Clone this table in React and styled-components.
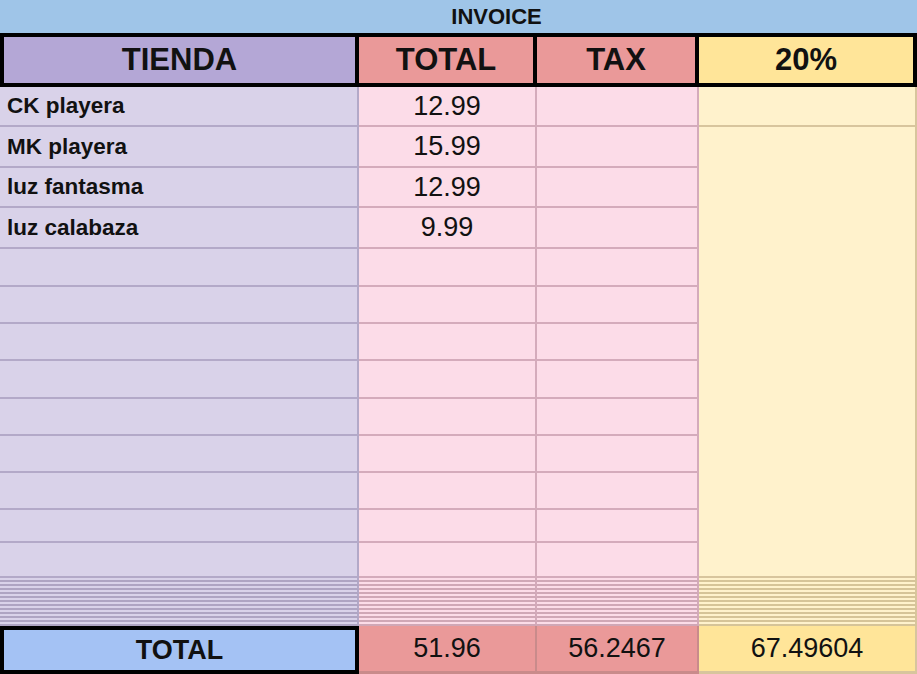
import React from 'react';
import styled, { createGlobalStyle, css } from 'styled-components';

const GlobalStyle = createGlobalStyle`
    body {
        margin: 0;
        background: #ffffff;
        font-family: "Liberation Sans", Arial, sans-serif;
    }
`;

const TONES = {
    purple: { head: '#b4a7d6', fill: '#d9d2e9', line: '#b3a9c8', stripe: '#aea4c2' },
    pink: { head: '#ea9999', fill: '#fcdce8', line: '#d4abbb', stripe: '#d0a7b6' },
    yellow: { head: '#ffe599', fill: '#fff2cc', line: '#d8c59d', stripe: '#d6c498' },
    blue: { head: '#a4c2f4', fill: '#a4c2f4', line: '#000000', stripe: '#000000' },
};

// hand-tuned row heights so the grid lines land where the sheet draws them
const ROWS = [
    '33px',
    '54px',
    '40px 41px 40px 41px',
    '38px 37px 37px 38px 37px 37px 37px 33px 35px',
    'repeat(12, 4px)',
    '48px',
].join(' ');

const Sheet = styled.div`
    display: grid;
    grid-template-columns: 359px 178px 162px 218px;
    grid-template-rows: ${ROWS};
    width: 917px;
    height: 674px;
    overflow: hidden;
    color: #111111;
`;

const Title = styled.div`
    grid-column: 1 / -1;
    background: #9fc5e8;
    display: flex;
    align-items: center;
    justify-content: center;
    padding-left: 76px;
    font-weight: 700;
    font-size: 22px;
`;

const HeadCell = styled.div`
    box-sizing: border-box;
    background: ${(p) => TONES[p.$tone].head};
    border-top: 4px solid #000;
    border-bottom: 4px solid #000;
    border-right: 4px solid #000;
    border-left: ${(p) => (p.$first ? '4px solid #000' : 'none')};
    display: flex;
    align-items: center;
    justify-content: center;
    font-weight: 700;
    font-size: 31px;
`;

const Cell = styled.div`
    box-sizing: border-box;
    background: ${(p) => TONES[p.$tone].fill};
    border-bottom: 2px solid ${(p) => TONES[p.$tone].line};
    border-right: 2px solid ${(p) => TONES[p.$tone].line};
    display: flex;
    align-items: center;
    min-height: 0;
    ${(p) => p.$span && css`grid-row: span ${p.$span};`}
`;

const NameCell = styled(Cell)`
    padding: 0 0 0 7px;
    font-weight: 700;
    font-size: 22.5px;
`;

const NumberCell = styled(Cell)`
    justify-content: center;
    font-size: 27px;
`;

const StripeCell = styled(Cell)`
    border-bottom: 2px solid ${(p) => TONES[p.$tone].stripe};
`;

const TotalLabel = styled.div`
    box-sizing: border-box;
    background: ${TONES.blue.head};
    border: 4px solid #000;
    display: flex;
    align-items: center;
    justify-content: center;
    font-weight: 700;
    font-size: 27px;
`;

const TotalValue = styled.div`
    box-sizing: border-box;
    background: ${(p) => TONES[p.$tone].head};
    border-right: 2px solid ${(p) => (p.$tone === 'yellow' ? '#d8c59d' : '#c98b8b')};
    border-bottom: 3px solid ${(p) => (p.$tone === 'yellow' ? '#d8c59d' : '#c98b8b')};
    display: flex;
    align-items: center;
    justify-content: center;
    font-size: 27px;
`;

const items = [
    { name: 'CK playera', total: '12.99' },
    { name: 'MK playera', total: '15.99' },
    { name: 'luz fantasma', total: '12.99' },
    { name: 'luz calabaza', total: '9.99' },
];

const EMPTY_ROWS = 9;
const STRIPE_ROWS = 12;

const App = () => {
    const emptyRows = Array.from({ length: EMPTY_ROWS });
    const stripes = Array.from({ length: STRIPE_ROWS });

    return (
        <>
            <GlobalStyle />
            <Sheet>
                <Title>INVOICE</Title>

                <HeadCell $tone="purple" $first>TIENDA</HeadCell>
                <HeadCell $tone="pink">TOTAL</HeadCell>
                <HeadCell $tone="pink">TAX</HeadCell>
                <HeadCell $tone="yellow">20%</HeadCell>

                {items.map((item, i) => (
                    <React.Fragment key={item.name}>
                        <NameCell $tone="purple">{item.name}</NameCell>
                        <NumberCell $tone="pink">{item.total}</NumberCell>
                        <Cell $tone="pink" />
                        {i === 0 && <Cell $tone="yellow" />}
                        {i === 1 && <Cell $tone="yellow" $span={items.length - 1 + EMPTY_ROWS} />}
                    </React.Fragment>
                ))}

                {emptyRows.map((_, i) => (
                    <React.Fragment key={`e${i}`}>
                        <Cell $tone="purple" />
                        <Cell $tone="pink" />
                        <Cell $tone="pink" />
                    </React.Fragment>
                ))}

                {stripes.map((_, i) => (
                    <React.Fragment key={`s${i}`}>
                        <StripeCell $tone="purple" />
                        <StripeCell $tone="pink" />
                        <StripeCell $tone="pink" />
                        <StripeCell $tone="yellow" />
                    </React.Fragment>
                ))}

                <TotalLabel>TOTAL</TotalLabel>
                <TotalValue $tone="pink">51.96</TotalValue>
                <TotalValue $tone="pink">56.2467</TotalValue>
                <TotalValue $tone="yellow">67.49604</TotalValue>
            </Sheet>
        </>
    );
};

export default App;
